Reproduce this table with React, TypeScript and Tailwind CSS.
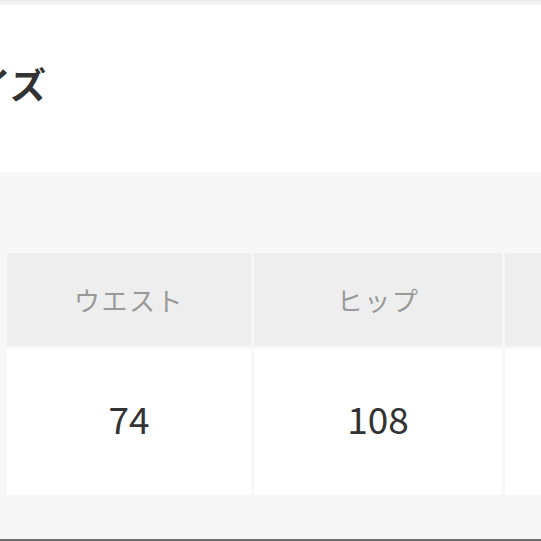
export default function App() {
  const headers = ["ウエスト", "ヒップ", ""];
  const values = ["74", "108", ""];

  return (
    <div
      className="w-[541px] h-[541px] overflow-hidden bg-white flex flex-col"
      style={{ fontFamily: '"Noto Sans CJK JP", "Noto Sans", sans-serif' }}
    >
      <div className="h-[5px] bg-gradient-to-b from-[#ececec] to-[#f6f6f6]" />
      <div className="h-[167px] flex items-center pb-[12px]">
        <h2 className="ml-[-61px] text-[36px] font-bold text-[#333333] leading-none whitespace-nowrap">
          サイズ
        </h2>
      </div>
      <div className="flex-1 bg-[#f7f7f7] flex flex-col pt-[81px]">
        <div className="grid grid-cols-[244px_248px_248px] gap-[3px] pl-[7px]">
          {headers.map((h, i) => (
            <div
              key={"h" + i}
              className="h-[93px] bg-[#eeeeee] flex items-center justify-center text-[26px] text-[#999999] tracking-[0.06em]"
            >
              {h}
            </div>
          ))}
          {values.map((v, i) => (
            <div
              key={"v" + i}
              className="h-[146px] bg-white flex items-center justify-center pb-[6px] text-[37px] text-[#333333]"
            >
              {v}
            </div>
          ))}
        </div>
        <div className="flex-1" />
        <div className="h-[2px] bg-[#707070]" />
      </div>
    </div>
  );
}
